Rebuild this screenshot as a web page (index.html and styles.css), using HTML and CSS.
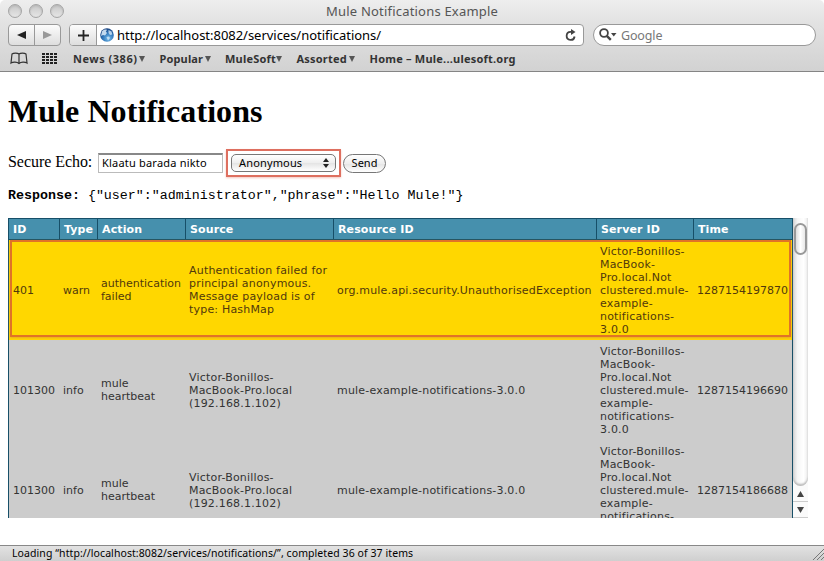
FILE: index.html
```html
<!DOCTYPE html>
<html lang="en">
<head>
<meta charset="utf-8">
<title>Mule Notifications Example</title>
<link rel="stylesheet" href="styles.css">
</head>
<body>
<div class="window">
  <header class="chrome">
    <div class="titlebar">
      <div class="lights"><i></i><i></i><i></i></div>
      <span class="title">Mule Notifications Example</span>
    </div>
    <div class="toolbar">
      <div class="history">
        <span><svg width="9" height="8"><path d="M9 0v8L0 4z" fill="#222"/></svg></span>
        <span><svg width="9" height="8"><path d="M0 0v8l9-4z" fill="#999"/></svg></span>
      </div>
      <div class="address">
        <span class="add"><svg width="11" height="11"><path d="M5.500 0v11M0 5.500h11" stroke="#222" stroke-width="1.800"/></svg></span>
        <svg class="globe" width="14" height="14" viewBox="0 0 14 14">
          <defs><radialGradient id="sea" cx=".6" cy=".75" r=".75"><stop offset="0" stop-color="#78bdec"/><stop offset=".55" stop-color="#2f75b8"/><stop offset="1" stop-color="#173f7c"/></radialGradient></defs>
          <circle cx="7" cy="7" r="6.800" fill="url(#sea)"/>
          <path d="M2 3.500C3.500 1.500 6 1 7 2L5.800 3.500 7 5 5 7.500 3 7 1 8z" fill="#d5e7f6" opacity=".9"/>
          <path d="M8.500 2l3 1.500.8 3-2.300.5-1.500-2zM6.500 9l2.500-.5 1 1.500-2 2.500z" fill="#d5e7f6" opacity=".8"/>
        </svg>
        <span class="url">http://localhost:8082/services/notifications/</span>
        <svg class="reload" width="12" height="13" viewBox="0 0 12 13"><path d="M7.500 2.900H5.500A4 4 0 1 0 9.600 7.500" fill="none" stroke="#444" stroke-width="1.800"/><path d="M6 0l4.500 3L6 6z" fill="#444"/></svg>
      </div>
      <div class="search">
        <svg width="18" height="14" viewBox="0 0 18 14"><circle cx="5" cy="5" r="3.900" fill="none" stroke="#444" stroke-width="1.800"/><path d="M7.800 7.800l4 4" stroke="#444" stroke-width="2.400"/><path d="M12 5h5.500l-2.750 3.500z" fill="#444"/></svg>
        <span>Google</span>
      </div>
    </div>
    <nav class="bookmarks">
      <svg class="book" width="18" height="13" viewBox="0 0 18 13"><path d="M9 2C7.500.8 3.500.8 2 2L1 11C3 9.800 7 9.800 9 11.500 11 9.800 15 9.800 17 11L16 2C14.500.8 10.500.8 9 2v9.500" fill="none" stroke="#333" stroke-width="1.200"/></svg>
      <svg class="grid" width="15" height="11"><path d="M0 1h15M0 4h15M0 7h15M0 10h15" stroke="#222" stroke-width="2" stroke-dasharray="3 1"/></svg>
      <span class="news">News (386)</span><b></b>
      <span class="popular">Popular</span><b></b>
      <span class="mulesoft">MuleSoft</span><b></b>
      <span class="assorted">Assorted</span><b></b>
      <span class="home">Home – Mule...ulesoft.org</span>
    </nav>
  </header>

  <main>
    <h1>Mule Notifications</h1>
    <div class="form">
      <label>Secure Echo:</label>
      <div class="field">Klaatu barada nikto</div>
      <div class="marked">
        <div class="select"><span>Anonymous</span><svg width="6" height="10"><path d="M3 0l3 4H0zM3 10l3-4H0z" fill="#222"/></svg></div>
      </div>
      <div class="send"><span>Send</span></div>
    </div>
    <div class="response"><strong>Response:</strong> {"user":"administrator","phrase":"Hello Mule!"}</div>

    <div class="scroller">
      <div class="viewport">
        <table>
          <colgroup><col class="c-id"><col class="c-type"><col class="c-action"><col class="c-source"><col class="c-resource"><col class="c-server"><col class="c-time"></colgroup>
          <thead><tr><th>ID</th><th>Type</th><th>Action</th><th>Source</th><th>Resource ID</th><th>Server ID</th><th>Time</th></tr></thead>
          <tbody>
            <tr class="warn">
              <td>401</td><td>warn</td><td>authentication<br>failed</td>
              <td class="wide">Authentication failed for<br>principal anonymous.<br>Message payload is of<br>type: HashMap</td>
              <td class="wide">org.mule.api.security.UnauthorisedException</td>
              <td class="wide">Victor-Bonillos-<br>MacBook-<br>Pro.local.Not<br>clustered.mule-<br>example-<br>notifications-<br>3.0.0</td>
              <td>1287154197870</td>
            </tr>
            <tr>
              <td>101300</td><td>info</td><td>mule<br>heartbeat</td>
              <td class="wide">Victor-Bonillos-<br>MacBook-Pro.local<br>(192.168.1.102)</td>
              <td class="wide">mule-example-notifications-3.0.0</td>
              <td class="wide">Victor-Bonillos-<br>MacBook-<br>Pro.local.Not<br>clustered.mule-<br>example-<br>notifications-<br>3.0.0</td>
              <td>1287154196690</td>
            </tr>
            <tr>
              <td>101300</td><td>info</td><td>mule<br>heartbeat</td>
              <td class="wide">Victor-Bonillos-<br>MacBook-Pro.local<br>(192.168.1.102)</td>
              <td class="wide">mule-example-notifications-3.0.0</td>
              <td class="wide">Victor-Bonillos-<br>MacBook-<br>Pro.local.Not<br>clustered.mule-<br>example-<br>notifications-<br>3.0.0</td>
              <td>1287154186688</td>
            </tr>
          </tbody>
        </table>
        <div class="outline"></div>
      </div>
      <div class="scrollbar">
        <div class="track"><div class="thumb"></div></div>
        <div class="arrow"><svg width="7" height="6"><path d="M3.500 0L7 6H0z" fill="#444"/></svg></div>
        <div class="arrow"><svg width="7" height="6"><path d="M0 0h7L3.500 6z" fill="#444"/></svg></div>
      </div>
    </div>
  </main>

  <footer>
    <span class="status">Loading “http://localhost:8082/services/notifications/”, completed 36 of 37 items</span>
    <svg width="12" height="12"><path d="M1 12L12 1M5 12l7-7M9 12l3-3" stroke="#777" stroke-width="1"/></svg>
  </footer>
</div>
</body>
</html>
```
FILE: styles.css
```css
* { box-sizing: border-box; }
body { margin: 0; background: #fff; color: #000; font-family: "Noto Sans", "Open Sans", sans-serif; }
svg { display: block; flex: none; }
.window { width: 824px; height: 561px; display: flex; flex-direction: column; overflow: hidden; white-space: nowrap; }

.chrome { height: 72px; flex: none; background: linear-gradient(#eee, #e2e2e2 24px, #d2d2d2); border-bottom: 1px solid #858585; border-radius: 5px 5px 0 0; }
.titlebar { height: 24px; display: grid; grid-template-columns: 326px auto 1fr; align-items: center; }
.lights { display: flex; gap: 7px; padding: 0 0 2px 8px; }
.lights i { width: 14px; height: 14px; border-radius: 50%; border: 1px solid #a5a5a5; background: linear-gradient(#c8c8c8, #e6e6e6); box-shadow: inset 0 1px 2px #b5b5b5; }
.title { font-size: 13px; line-height: 20px; margin-top: -2px; color: #555; letter-spacing: .2px; }
.toolbar { display: flex; height: 22px; padding-left: 8px; }
.history { width: 53px; display: flex; border: 1px solid #999; border-radius: 4px; background: linear-gradient(#fcfcfc, #dedede); }
.history span { flex: 1; display: flex; align-items: center; justify-content: center; }
.history span + span { border-left: 1px solid #999; }
.address { width: 515px; margin-left: 8px; display: flex; align-items: center; background: #fff; border: 1px solid #999; border-radius: 4px; overflow: hidden; }
.add { width: 27px; height: 20px; display: flex; align-items: center; justify-content: center; border-right: 1px solid #999; background: linear-gradient(#fcfcfc, #dedede); }
.globe { margin-left: 3px; }
.url { margin-left: 3px; font-size: 13px; line-height: 20px; letter-spacing: -.03px; flex: 1; }
.reload { margin-right: 6px; }
.search { width: 223px; margin-left: 9px; padding-left: 5px; display: flex; align-items: center; background: #fff; border: 1px solid #999; border-radius: 11px; font-size: 12.500px; color: #777; }
.search span { margin-left: 4px; letter-spacing: -.15px; }
.bookmarks { height: 25px; display: flex; align-items: center; padding-left: 10px; font-size: 11px; font-weight: 700; color: #333; }
.grid { margin: 0 16px 0 14px; }
.news { width: 66px; letter-spacing: .5px; }
.popular { width: 45px; letter-spacing: .15px; }
.mulesoft { width: 51px; letter-spacing: .2px; }
.assorted { width: 52px; letter-spacing: .2px; }
.home { letter-spacing: .22px; }
.bookmarks b { width: 0; border: 3.500px solid transparent; border-top: 6px solid #555; border-bottom: 0; margin-right: 14px; }
.bookmarks .news + b { margin-right: 14.500px; }
.bookmarks .mulesoft + b, .bookmarks .assorted + b { margin-right: 14px; }

main { flex: 1; min-height: 0; padding: 0 8px; }
h1 { margin: 21px 0 0; font: bold 32px/37px "Liberation Serif", serif; letter-spacing: .07px; }
.form { display: flex; height: 28px; margin-top: 19px; align-items: center; }
.form label { width: 89px; font: 16px/20px "Liberation Serif", serif; letter-spacing: -.05px; padding-bottom: 2px; }
.field { width: 125px; height: 20px; border: 1px solid #bbb; border-top: 2px solid #888; padding-left: 3px; font-size: 11px; line-height: 16px; letter-spacing: .2px; margin-left: 1px; }
.marked { margin-left: 3px; width: 115px; height: 28px; border: 2px solid #de6f5f; padding: 3px; box-shadow: 0 1px 2px #f5c6bf; }
.select { width: 105px; height: 18px; border: 1px solid #777; border-radius: 5px; background: linear-gradient(#fff, #eee 50%, #e4e4e4 51%, #fff); display: flex; align-items: center; justify-content: space-between; padding: 0 6px 0 7px; font-size: 11px; line-height: 15px; letter-spacing: .15px; }
.select span { margin-top: -2px; }
.send { width: 43px; height: 19px; margin-left: 2px; border: 1px solid #777; border-radius: 10px; background: linear-gradient(#fff, #eee 50%, #e4e4e4 51%, #fff); font-size: 11px; line-height: 16px; text-align: center; }
.response { margin-top: 11px; height: 15px; font: 13.320px/15px "Liberation Mono", monospace; }

.scroller { width: 800px; height: 300px; margin-top: 15px; display: flex; }
.viewport { position: relative; width: 785px; overflow: hidden; }
table { width: 785px; table-layout: fixed; border-collapse: separate; border-spacing: 0; border: 1px solid #174f68; background: #ccc; font: 11px/13px "DejaVu Sans", sans-serif; color: #333; }
.c-id { width: 51px; } .c-type { width: 38px; } .c-action { width: 88px; } .c-source { width: 148px; }
.c-resource { width: 263px; } .c-server { width: 97px; } .c-time { width: 98px; }
th { height: 21px; padding: 0 0 0 4px; background: #4690ad; border-right: 1px solid #174f68; border-bottom: 1px solid #174f68; color: #fff; text-align: left; font-weight: 700; letter-spacing: .12px; }
th:last-child { border-right: 0; }
td { height: 100px; padding: 0 0 0 3px; vertical-align: middle; font-variant-ligatures: none; }
td:first-child { padding-left: 4px; }
td.wide { letter-spacing: .19px; }
.warn td { background: #ffd700; color: #51390c; }
.outline { position: absolute; left: 2px; top: 22px; width: 781px; height: 97px; border: 2px solid #e07327; box-shadow: 0 1px 2px #e9ac20; }
.scrollbar { width: 15px; display: flex; flex-direction: column; background: #fafafa; }
.track { height: 268px; padding: 5px 1px 0; border-radius: 0 0 8px 8px; background: linear-gradient(90deg, #d5d5d5, #f5f5f5 30%, #fff 70%, #eee); box-shadow: inset 0 -2px 2px #bbb; }
.thumb { width: 13px; height: 32px; border: 2px solid #999; border-radius: 7px; background: linear-gradient(90deg, #ddd, #fff 50%, #e8e8e8); }
.arrow { height: 16px; display: flex; align-items: center; justify-content: center; border-bottom: 1px solid #ccc; }

footer { height: 16px; flex: none; display: flex; justify-content: space-between; align-items: center; padding-left: 12px; border-top: 1px solid #888; background: linear-gradient(#e2e2e2, #cfcfcf); font-size: 10.500px; line-height: 15px; letter-spacing: .08px; }
.bookmarks span { flex: none; }
.bookmarks .popular + b { margin-right: 14.500px; }
.bookmarks .mulesoft + b { margin-right: 14.500px; }
.bookmarks .assorted + b { margin-right: 15px; }
```
